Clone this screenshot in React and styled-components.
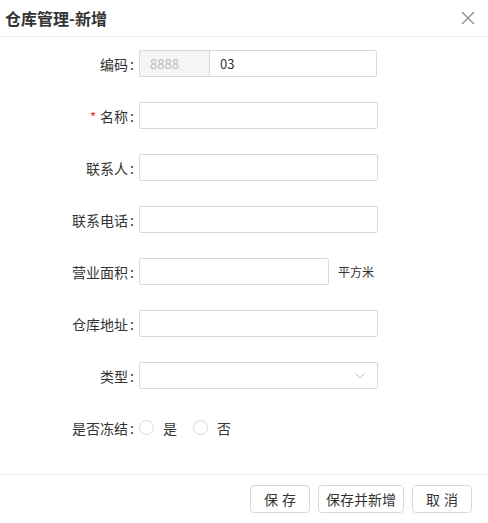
import React, { useState } from "react"
import styled, { createGlobalStyle } from "styled-components"

const GlobalStyle = createGlobalStyle`
    body {
        margin: 0;
        background: #fff;
        font-family: "Noto Sans CJK SC", "Noto Sans", sans-serif;
        color: #333;
    }
`

const Dialog = styled.div`
    width: 488px;
    height: 523px;
    display: flex;
    flex-direction: column;
    background: #fff;
`

const Header = styled.div`
    height: 37px;
    display: flex;
    align-items: center;
    justify-content: space-between;
    padding: 0 13px 0 5px;
    border-bottom: 1px solid #ececec;
    box-sizing: border-box;
`

const Title = styled.div`
    font-size: 16px;
    font-weight: bold;
    color: #333;
`

const CloseButton = styled.button`
    border: none;
    background: none;
    padding: 0;
    width: 14px;
    height: 14px;
    display: flex;
    cursor: pointer;
`

const Form = styled.div`
    flex: 1;
    display: flex;
    flex-direction: column;
    gap: 25px;
    padding-top: 13px;
`

const Row = styled.div`
    display: flex;
    align-items: center;
    height: 27px;
`

const Label = styled.label`
    width: 134px;
    margin-right: 5px;
    text-align: right;
    font-size: 14px;
    color: #333;
    white-space: nowrap;
`

const Colon = styled.span`
    margin-left: 2px;
`

const Required = styled.span`
    color: #f5222d;
    margin-right: 4px;
    font-size: 13px;
`

const TextInput = styled.input`
    width: ${props => props.$width || 239}px;
    height: 27px;
    box-sizing: border-box;
    border: 1px solid #d9d9d9;
    border-radius: ${props => props.$joined ? "0 2px 2px 0" : "2px"};
    padding: 0 10px;
    font-size: 13px;
    font-family: inherit;
    color: #333;
    outline: none;
`

const Prefix = styled.div`
    width: 70px;
    height: 27px;
    box-sizing: border-box;
    border: 1px solid #d9d9d9;
    border-right: none;
    border-radius: 2px 0 0 2px;
    background: #f5f5f5;
    color: #bbb;
    font-size: 13px;
    display: flex;
    align-items: center;
    padding-left: 10px;
`

const Unit = styled.span`
    margin-left: 9px;
    font-size: 12px;
    color: #333;
`

const SelectBox = styled.div`
    width: 239px;
    height: 27px;
    box-sizing: border-box;
    border: 1px solid #d9d9d9;
    border-radius: 2px;
    display: flex;
    align-items: center;
    justify-content: flex-end;
    padding-right: 11px;
`

const RadioGroup = styled.div`
    display: flex;
    align-items: center;
    gap: 16px;
`

const RadioItem = styled.label`
    display: flex;
    align-items: center;
    gap: 9px;
    font-size: 14px;
    cursor: pointer;
`

const RadioCircle = styled.span`
    width: 15px;
    height: 15px;
    box-sizing: border-box;
    border: 1px solid ${props => props.$checked ? "#1890ff" : "#d9d9d9"};
    border-radius: 50%;
    display: flex;
    align-items: center;
    justify-content: center;
    &::after {
        content: "";
        width: 7px;
        height: 7px;
        border-radius: 50%;
        background: ${props => props.$checked ? "#1890ff" : "transparent"};
    }
`

const Footer = styled.div`
    height: 49px;
    border-top: 1px solid #ececec;
    display: flex;
    align-items: center;
    justify-content: flex-end;
    gap: 8px;
    padding-right: 16px;
    box-sizing: border-box;
`

const Button = styled.button`
    height: 28px;
    min-width: ${props => props.$wide ? 86 : 60}px;
    padding: 0 7px;
    box-sizing: border-box;
    border: 1px solid #d9d9d9;
    border-radius: 4px;
    background: #fff;
    font-size: 14px;
    font-family: inherit;
    color: #333;
    letter-spacing: ${props => props.$spaced ? "4px" : "0"};
    text-indent: ${props => props.$spaced ? "4px" : "0"};
    cursor: pointer;
`

const App = () => {
    const [frozen, setFrozen] = useState(null)

    return (
        <Dialog>
            <GlobalStyle />
            <Header>
                <Title>仓库管理-新增</Title>
                <CloseButton>
                    <svg width="14" height="14" viewBox="0 0 14 14">
                        <path d="M1 1L13 13M13 1L1 13" stroke="#8c8c8c" strokeWidth="1.3" fill="none" />
                    </svg>
                </CloseButton>
            </Header>
            <Form>
                <Row>
                    <Label>编码<Colon>:</Colon></Label>
                    <Prefix>8888</Prefix>
                    <TextInput $width={168} $joined defaultValue="03" />
                </Row>
                <Row>
                    <Label><Required>*</Required>名称<Colon>:</Colon></Label>
                    <TextInput />
                </Row>
                <Row>
                    <Label>联系人<Colon>:</Colon></Label>
                    <TextInput />
                </Row>
                <Row>
                    <Label>联系电话<Colon>:</Colon></Label>
                    <TextInput />
                </Row>
                <Row>
                    <Label>营业面积<Colon>:</Colon></Label>
                    <TextInput $width={190} />
                    <Unit>平方米</Unit>
                </Row>
                <Row>
                    <Label>仓库地址<Colon>:</Colon></Label>
                    <TextInput />
                </Row>
                <Row>
                    <Label>类型<Colon>:</Colon></Label>
                    <SelectBox>
                        <svg width="12" height="7" viewBox="0 0 12 7">
                            <path d="M1 1L6 6L11 1" stroke="#bfbfbf" strokeWidth="1" fill="none" />
                        </svg>
                    </SelectBox>
                </Row>
                <Row>
                    <Label>是否冻结<Colon>:</Colon></Label>
                    <RadioGroup>
                        <RadioItem onClick={() => setFrozen(true)}>
                            <RadioCircle $checked={frozen === true} />是
                        </RadioItem>
                        <RadioItem onClick={() => setFrozen(false)}>
                            <RadioCircle $checked={frozen === false} />否
                        </RadioItem>
                    </RadioGroup>
                </Row>
            </Form>
            <Footer>
                <Button $spaced>保存</Button>
                <Button $wide>保存并新增</Button>
                <Button $spaced>取消</Button>
            </Footer>
        </Dialog>
    )
}

export default App
